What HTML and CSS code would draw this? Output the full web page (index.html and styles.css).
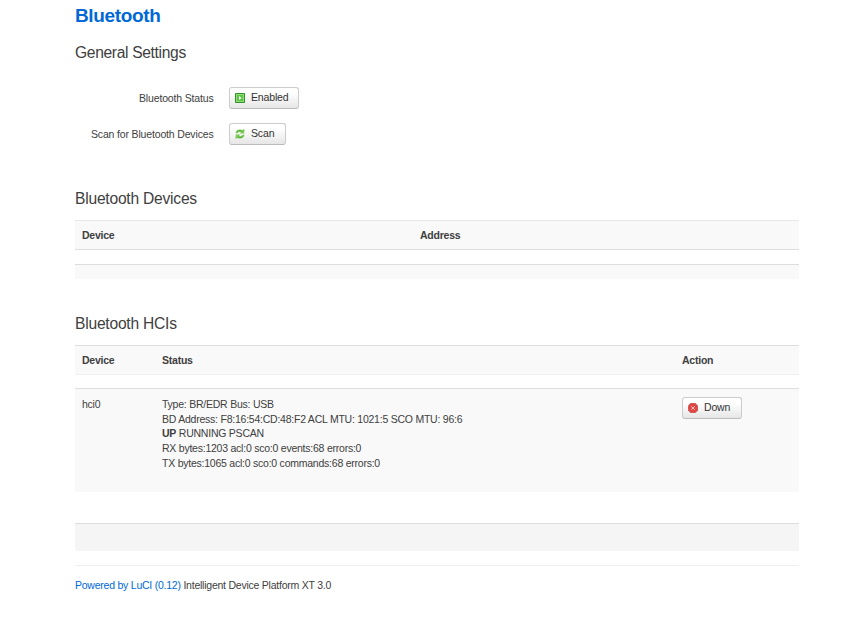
FILE: index.html
```html
<!DOCTYPE html>
<html lang="en">
<head>
<meta charset="utf-8">
<title>Bluetooth</title>
<link rel="stylesheet" href="styles.css">
</head>
<body>
<main class="page">
  <h1>Bluetooth</h1>
  <section class="settings">
    <h2>General Settings</h2>
    <div class="field">
      <label>Bluetooth Status</label>
      <button class="btn btn-enabled" type="button">
        <svg class="icon" viewBox="0 0 10 10"><rect width="10" height="10" rx=".8" fill="#32962c"/><rect x="1" y="1" width="8" height="8" fill="#92d878"/><rect x="2" y="2" width="6" height="6" fill="#5cc748"/><path d="M4 3 6.6 5 4 7z" fill="#fff"/></svg>
        <span>Enabled</span>
      </button>
    </div>
    <div class="field">
      <label>Scan for Bluetooth Devices</label>
      <button class="btn btn-scan" type="button">
        <svg class="icon" viewBox="0 0 10 10"><g fill="#7cc95a"><path d="M.5 4.3C1 1.2 3.8-.5 7.4 1L9.6 0 9.2 4.5H4.6L6 3C4.5 2.6 3 3.2 2.4 4.3z"/><path d="M9.5 5.7C9 8.8 6.2 10.5 2.6 9L.4 10 .8 5.5H5.4L4 7C5.5 7.4 7 6.8 7.6 5.7z"/></g><path d="M1.5 3.5C2.2 1.5 4.4.7 7.4 2M8.5 6.5C7.8 8.5 5.6 9.3 2.6 8" fill="none" stroke="#52a83b" stroke-width=".7"/></svg>
        <span>Scan</span>
      </button>
    </div>
  </section>
  <section class="devices">
    <h2>Bluetooth Devices</h2>
    <div class="row head"><b class="col-half">Device</b><b>Address</b></div>
    <div class="row empty"></div>
  </section>
  <section class="hcis">
    <h2>Bluetooth HCIs</h2>
    <div class="row head"><b class="col-device">Device</b><b class="col-status">Status</b><b>Action</b></div>
    <div class="row entry">
      <div class="col-device">hci0</div>
      <div class="col-status">
        <div>Type: BR/EDR Bus: USB</div>
        <div>BD Address: F8:16:54:CD:48:F2 ACL MTU: 1021:5 SCO MTU: 96:6</div>
        <div><b>UP</b> RUNNING PSCAN</div>
        <div>RX bytes:1203 acl:0 sco:0 events:68 errors:0</div>
        <div>TX bytes:1065 acl:0 sco:0 commands:68 errors:0</div>
      </div>
      <button class="btn btn-down" type="button">
        <svg class="icon" viewBox="0 0 10 10"><path d="M2.5 0h5L10 2.5v5L7.5 10h-5L0 7.5v-5z" fill="#c9605e"/><path d="M2.9 1h4.2L9 2.9v4.2L7.1 9H2.9L1 7.1V2.9z" fill="#e14441"/><path d="m3.2 3.2 3.6 3.6m0-3.6L3.2 6.8" stroke="#ffc4c0"/></svg>
        <span>Down</span>
      </button>
    </div>
  </section>
  <div class="actions"></div>
  <footer><a>Powered by LuCI (0.12)</a> Intelligent Device Platform XT 3.0</footer>
</main>
</body>
</html>
```
FILE: styles.css
```css
* { box-sizing: border-box; }
body {
  margin: 0;
  background: #fff;
  color: #404040;
  font: 10.5px/14.7px "Liberation Sans", Helvetica, Arial, sans-serif;
  letter-spacing: -0.235px;
}
.page { width: 724px; margin-left: 75px; }
h1 {
  height: 30px;
  margin: 0;
  padding-top: 1px;
  color: #0069d6;
  font-size: 19px;
  line-height: 30px;
  letter-spacing: -0.35px;
}
h2 {
  height: 30px;
  margin: 0;
  font-size: 15.6px;
  font-weight: 400;
  line-height: 31px;
  letter-spacing: -0.22px;
}
.settings { height: 147px; padding-top: 7px; }
.settings h2 { margin-bottom: 20px; letter-spacing: -0.33px; }
.devices h2 { line-height: 30px; }
.field { display: flex; height: 22px; margin-bottom: 14px; }
.field label {
  width: 138.5px;
  margin-right: 15.5px;
  line-height: 23px;
  letter-spacing: -0.16px;
  text-align: right;
}
.btn {
  display: flex;
  align-items: center;
  height: 22px;
  padding: 0 0 1px 5px;
  border: 1px solid #ccc;
  border-bottom-color: #bbb;
  border-radius: 3px;
  background: linear-gradient(#fff, #fff 25%, #e6e6e6);
  color: #333;
  font: inherit;
  letter-spacing: -0.15px;
}
.icon { width: 10px; height: 10px; margin-right: 6px; flex: none; }
.btn-enabled { width: 70px; }
.btn-scan { width: 57px; }
.btn-down { width: 60px; }
.devices { height: 124px; margin-top: 7px; }
.row {
  display: flex;
  padding-left: 7px;
  border-top: 1px solid #ddd;
  background: #f9f9f9;
}
.head {
  height: 30px;
  border-bottom: 1px solid #ddd;
  line-height: 29px;
}
.devices .head { margin-top: 6px; border-top-color: #e8e8e8; }
.empty { height: 15px; margin-top: 14px; }
.hcis .head { margin-top: 7px; border-bottom-color: #f0f0f0; }
.col-half { width: 338px; }
.col-device { width: 80px; }
.col-status { width: 520px; }
.entry { height: 104px; margin-top: 13px; padding-top: 8px; align-items: flex-start; }
.actions {
  height: 28px;
  margin-top: 31px;
  border-top: 1px solid #ddd;
  border-radius: 0 0 2px 2px;
  background: #f5f5f5;
}
footer { margin-top: 14px; padding-top: 12px; border-top: 1px solid #eee; }
footer a { color: #0069d6; }
```
